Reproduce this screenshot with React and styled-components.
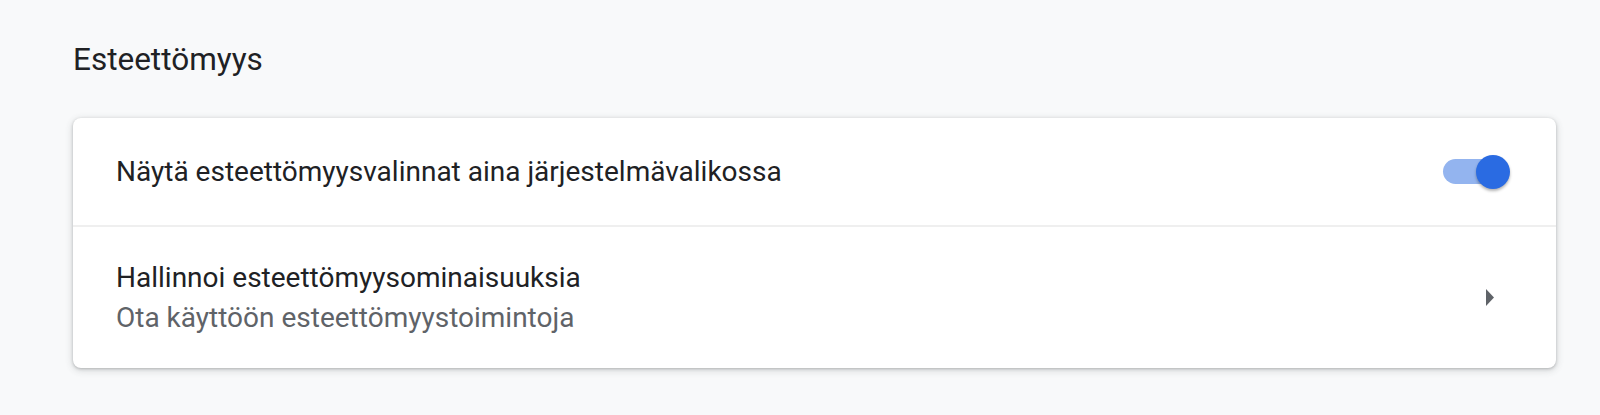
import React from 'react';
import styled, { createGlobalStyle } from 'styled-components';

const GlobalStyle = createGlobalStyle`
  html, body {
    margin: 0;
    padding: 0;
    background: #f8f9fa;
  }
  body {
    font-family: Roboto, "Liberation Sans", sans-serif;
    color: #202124;
    -webkit-font-smoothing: antialiased;
  }
`;

const Page = styled.div`
  display: flex;
  flex-direction: column;
  padding: 40px 44px 0 73px;
  min-height: 415px;
  box-sizing: border-box;
`;

const SectionTitle = styled.h2`
  margin: 0 0 38px 0;
  font-size: 31.5px;
  font-weight: 400;
  line-height: 40px;
  color: #202124;
`;

const Card = styled.div`
  display: flex;
  flex-direction: column;
  background: #fff;
  border-radius: 8px;
  box-shadow: 0 1px 3px rgba(60, 64, 67, 0.3), 0 2px 6px 2px rgba(60, 64, 67, 0.12);
`;

const Row = styled.div`
  display: flex;
  align-items: center;
  justify-content: space-between;
  height: ${p => p.height}px;
  padding: 0 ${p => p.right}px 0 43px;
  border-top: ${p => (p.divided ? '2px solid #efefef' : 'none')};
`;

const Texts = styled.div`
  display: flex;
  flex-direction: column;
`;

const Label = styled.div`
  font-size: 28px;
  line-height: 40px;
  color: ${p => (p.secondary ? '#5f6368' : '#202124')};
`;

const Toggle = styled.div`
  position: relative;
  width: 60px;
  height: 25px;
  display: flex;
  align-items: center;
`;

const Track = styled.div`
  width: 56px;
  height: 25px;
  border-radius: 13px;
  background: #93b4ef;
`;

const Knob = styled.div`
  position: absolute;
  right: -7px;
  top: 50%;
  width: 34px;
  height: 34px;
  margin-top: -17px;
  border-radius: 50%;
  background: #2a6be2;
  box-shadow: 0 2px 3px rgba(0, 0, 0, 0.3);
`;

const Arrow = styled.svg`
  width: 10px;
  height: 17px;
  fill: #5f6368;
`;

export default function App() {
  return (
    <>
      <GlobalStyle />
      <Page>
        <SectionTitle>Esteettömyys</SectionTitle>
        <Card>
          <Row height={107} right={53}>
            <Label>Näytä esteettömyysvalinnat aina järjestelmävalikossa</Label>
            <Toggle>
              <Track />
              <Knob />
            </Toggle>
          </Row>
          <Row height={141} right={61} divided>
            <Texts>
              <Label>Hallinnoi esteettömyysominaisuuksia</Label>
              <Label secondary>Ota käyttöön esteettömyystoimintoja</Label>
            </Texts>
            <Arrow viewBox="0 0 10 17">
              <path d="M1 0 L9 8.5 L1 17 Z" />
            </Arrow>
          </Row>
        </Card>
      </Page>
    </>
  );
}
